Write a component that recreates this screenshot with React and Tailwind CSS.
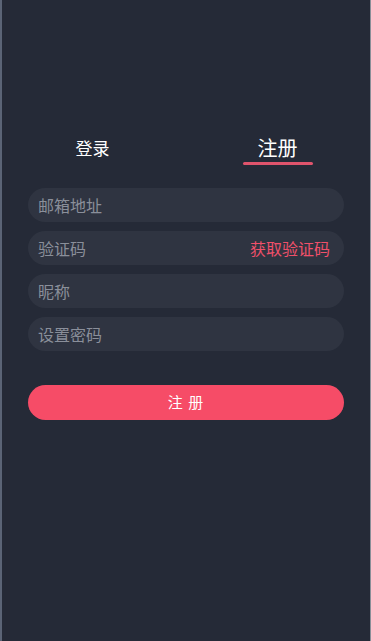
import React from 'react';

const fields = ['邮箱地址', '验证码', '昵称', '设置密码'];

const App = () => {
  return (
    <div
      className="h-[641px] w-[371px] bg-[#252a37] border-l-2 border-l-[#5b6476] border-r border-r-[#8a8f98]"
      style={{ fontFamily: '"Noto Sans CJK SC", "Noto Sans", sans-serif' }}
    >
      {/* Tabs */}
      <div className="flex pt-[132px] -ml-[2px]">
        <div className="flex-1 flex justify-center">
          <span className="text-[17px] leading-[32px] text-white">登录</span>
        </div>
        <div className="flex-1 flex flex-col items-center">
          <span className="text-[20px] leading-[32px] text-white">注册</span>
          <div className="w-[70px] h-[3px] rounded-full bg-[#e0546c] -mt-[2px]" />
        </div>
      </div>

      {/* Form */}
      <div className="px-[26px] pt-[23px] flex flex-col gap-[9px]">
        {fields.map((f, i) => (
          <div
            key={f}
            className="h-[34px] rounded-full bg-[#2f3441] flex items-center justify-between pl-[10px] pr-[14px]"
          >
            <span className="text-[16px] text-[#8a8f9a]">{f}</span>
            {i === 1 && <span className="text-[16px] text-[#f0506a]">获取验证码</span>}
          </div>
        ))}

        <button className="mt-[25px] h-[35px] rounded-full bg-[#f64c67] text-white text-[15px] tracking-[1px]">
          注 册
        </button>
      </div>
    </div>
  );
};

export default App;
